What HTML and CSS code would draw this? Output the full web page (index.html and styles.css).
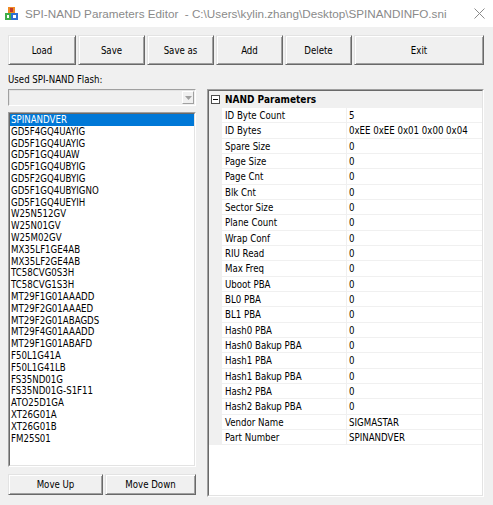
FILE: index.html
```html
<!DOCTYPE html>
<html>
<head>
    <title>SPI-NAND Parameters Editor</title>
    <link rel="stylesheet" href="styles.css">
</head>
<body>
    <div class="window">
        <div class="titlebar">
            <svg class="app-icon" width="13" height="13" viewBox="0 0 13 13">
                <rect x="3" y="0" width="7" height="6" fill="#f08a24"/>
                <rect x="5" y="1" width="3" height="4" fill="#c0392b"/>
                <rect x="0" y="6" width="6" height="7" fill="#3fae49"/>
                <rect x="6" y="6" width="7" height="7" fill="#2f6fd1"/>
                <rect x="2" y="8" width="2" height="3" fill="#ffffff"/>
                <rect x="8" y="8" width="3" height="3" fill="#ffffff"/>
            </svg>
            <span class="title">SPI-NAND Parameters Editor  - C:\Users\kylin.zhang\Desktop\SPINANDINFO.sni</span>
            <svg class="close" width="11" height="11" viewBox="0 0 11 11">
                <path d="M0.5 0.5 L10.5 10.5 M10.5 0.5 L0.5 10.5" stroke="#8a8a8a" stroke-width="1" fill="none"/>
            </svg>
        </div>

        <div class="client">
            <div class="toolbar">
                <button class="btn btn-load">Load</button>
                <button class="btn btn-std">Save</button>
                <button class="btn btn-std">Save as</button>
                <button class="btn btn-std">Add</button>
                <button class="btn btn-std">Delete</button>
                <button class="btn btn-exit">Exit</button>
            </div>

            <div class="main">
                <div class="left">
                    <div class="label">Used SPI-NAND Flash:</div>
                    <div class="combo">
                        <div class="combo-btn">
                            <svg width="7" height="4" viewBox="0 0 7 4"><path d="M0 0 L7 0 L3.5 4 Z" fill="#a0a0a0"/></svg>
                        </div>
                    </div>
                    <div class="list-frame">
                        <ul class="list">
                            <li class="selected">SPINANDVER</li>
                            <li>GD5F4GQ4UAYIG</li>
                            <li>GD5F1GQ4UAYIG</li>
                            <li>GD5F1GQ4UAW</li>
                            <li>GD5F1GQ4UBYIG</li>
                            <li>GD5F2GQ4UBYIG</li>
                            <li>GD5F1GQ4UBYIGNO</li>
                            <li>GD5F1GQ4UEYIH</li>
                            <li>W25N512GV</li>
                            <li>W25N01GV</li>
                            <li>W25M02GV</li>
                            <li>MX35LF1GE4AB</li>
                            <li>MX35LF2GE4AB</li>
                            <li>TC58CVG0S3H</li>
                            <li>TC58CVG1S3H</li>
                            <li>MT29F1G01AAADD</li>
                            <li>MT29F2G01AAAED</li>
                            <li>MT29F2G01ABAGDS</li>
                            <li>MT29F4G01AAADD</li>
                            <li>MT29F1G01ABAFD</li>
                            <li>F50L1G41A</li>
                            <li>F50L1G41LB</li>
                            <li>FS35ND01G</li>
                            <li>FS35ND01G-S1F11</li>
                            <li>ATO25D1GA</li>
                            <li>XT26G01A</li>
                            <li>XT26G01B</li>
                            <li>FM25S01</li>
                        </ul>
                    </div>
                    <div class="move-row">
                        <button class="btn btn-up">Move Up</button>
                        <button class="btn btn-down">Move Down</button>
                    </div>
                </div>

                <div class="grid">
                    <div class="category">
                        <span class="toggle"></span>
                        <span>NAND Parameters</span>
                    </div>
                    <div class="row"><div class="gutter"></div><div class="name">ID Byte Count</div><div class="value">5</div></div>
                    <div class="row"><div class="gutter"></div><div class="name">ID Bytes</div><div class="value">0xEE 0xEE 0x01 0x00 0x04</div></div>
                    <div class="row"><div class="gutter"></div><div class="name">Spare Size</div><div class="value">0</div></div>
                    <div class="row"><div class="gutter"></div><div class="name">Page Size</div><div class="value">0</div></div>
                    <div class="row"><div class="gutter"></div><div class="name">Page Cnt</div><div class="value">0</div></div>
                    <div class="row"><div class="gutter"></div><div class="name">Blk Cnt</div><div class="value">0</div></div>
                    <div class="row"><div class="gutter"></div><div class="name">Sector Size</div><div class="value">0</div></div>
                    <div class="row"><div class="gutter"></div><div class="name">Plane Count</div><div class="value">0</div></div>
                    <div class="row"><div class="gutter"></div><div class="name">Wrap Conf</div><div class="value">0</div></div>
                    <div class="row"><div class="gutter"></div><div class="name">RIU Read</div><div class="value">0</div></div>
                    <div class="row"><div class="gutter"></div><div class="name">Max Freq</div><div class="value">0</div></div>
                    <div class="row"><div class="gutter"></div><div class="name">Uboot PBA</div><div class="value">0</div></div>
                    <div class="row"><div class="gutter"></div><div class="name">BL0 PBA</div><div class="value">0</div></div>
                    <div class="row"><div class="gutter"></div><div class="name">BL1 PBA</div><div class="value">0</div></div>
                    <div class="row"><div class="gutter"></div><div class="name">Hash0 PBA</div><div class="value">0</div></div>
                    <div class="row"><div class="gutter"></div><div class="name">Hash0 Bakup PBA</div><div class="value">0</div></div>
                    <div class="row"><div class="gutter"></div><div class="name">Hash1 PBA</div><div class="value">0</div></div>
                    <div class="row"><div class="gutter"></div><div class="name">Hash1 Bakup PBA</div><div class="value">0</div></div>
                    <div class="row"><div class="gutter"></div><div class="name">Hash2 PBA</div><div class="value">0</div></div>
                    <div class="row"><div class="gutter"></div><div class="name">Hash2 Bakup PBA</div><div class="value">0</div></div>
                    <div class="row"><div class="gutter"></div><div class="name">Vendor Name</div><div class="value">SIGMASTAR</div></div>
                    <div class="row"><div class="gutter"></div><div class="name">Part Number</div><div class="value">SPINANDVER</div></div>
                </div>
            </div>
        </div>
    </div>
</body>
</html>
```

FILE: styles.css
```css
html, body {
    margin: 0;
    padding: 0;
    background: #f0f0f0;
}
body {
    font-family: "DejaVu Sans Condensed", "DejaVu Sans", sans-serif;
    font-stretch: condensed;
    font-size: 9.6px;
    color: #000;
}
.window {
    width: 493px;
    height: 505px;
    display: flex;
    flex-direction: column;
    overflow: hidden;
}
.titlebar {
    height: 27px;
    flex: none;
    background: #fff;
    display: flex;
    align-items: center;
    padding: 0 8px 0 5px;
}
.app-icon {
    flex: none;
    margin-right: 7px;
}
.title {
    white-space: pre;
    font-family: "Liberation Sans", Arial, sans-serif;
    font-stretch: normal;
    font-size: 11.7px;
    color: #8a8a8a;
    flex: 1;
}
.close {
    flex: none;
}
.client {
    flex: 1;
    padding: 8px 9px 0 8px;
}
.btn {
    font-family: inherit;
    font-stretch: condensed;
    font-size: 9.6px;
    color: #000;
    background: #f0f0f0;
    border: 1px solid;
    border-color: #e3e3e3 #696969 #696969 #e3e3e3;
    box-shadow: inset 1px 1px #fff, inset -1px -1px #a0a0a0;
    padding: 0;
    margin: 0;
}
.toolbar {
    display: flex;
    gap: 2px;
    height: 30px;
}
.btn-load { width: 68px; }
.btn-std { width: 67px; }
.btn-exit { flex: 1; }
.main {
    display: flex;
    gap: 11px;
    margin-top: 9px;
}
.left {
    width: 188px;
    display: flex;
    flex-direction: column;
}
.label {
    height: 12px;
    line-height: 12px;
    margin-bottom: 3px;
}
.combo {
    height: 17px;
    box-sizing: border-box;
    border: 1px solid;
    border-color: #a0a0a0 #fff #fff #a0a0a0;
    box-shadow: inset 1px 1px #e3e3e3;
    display: flex;
    justify-content: flex-end;
    padding: 1px;
}
.combo-btn {
    width: 12px;
    box-sizing: border-box;
    border: 1px solid;
    border-color: #fff #a0a0a0 #a0a0a0 #fff;
    display: flex;
    align-items: center;
    justify-content: center;
}
.list-frame {
    margin-top: 6px;
    height: 355px;
    box-sizing: border-box;
    border: 1px solid;
    border-color: #a0a0a0 #fff #fff #a0a0a0;
}
.list {
    list-style: none;
    margin: 0;
    padding: 0;
    height: 100%;
    box-sizing: border-box;
    background: #fff;
    border: 1px solid;
    border-color: #696969 #e3e3e3 #e3e3e3 #696969;
}
.list li {
    height: 11.8px;
    line-height: 11.8px;
    padding-left: 1px;
    font-size: 9.6px;
    white-space: nowrap;
}
.list li.selected {
    background: #0078d7;
    color: #fff;
}
.move-row {
    display: flex;
    gap: 2px;
    margin-top: 7px;
    height: 21px;
}
.btn-up { width: 95px; }
.btn-down { flex: 1; }
.grid {
    flex: 1;
    margin-top: 15px;
    height: 408px;
    box-sizing: border-box;
    border: 1px solid;
    border-color: #a0a0a0 #fff #fff #a0a0a0;
    background: #fff;
    position: relative;
}
.grid::before {
    content: "";
    position: absolute;
    inset: 0;
    border: 1px solid;
    border-color: #696969 #e3e3e3 #e3e3e3 #696969;
    pointer-events: none;
}
.category {
    height: 17px;
    margin: 1px 1px 0 1px;
    background: #f0f0f0;
    display: flex;
    align-items: center;
    font-weight: bold;
    font-size: 10px;
}
.toggle {
    width: 7px;
    height: 7px;
    border: 1px solid #4d4d4d;
    background: #fff;
    margin: 0 5px 0 2px;
    position: relative;
}
.toggle::after {
    content: "";
    position: absolute;
    left: 1px;
    top: 3px;
    width: 5px;
    height: 1px;
    background: #000;
}
.row {
    display: flex;
    height: 15.33px;
    margin: 0 1px;
}
.gutter {
    width: 13px;
    background: #f0f0f0;
}
.name {
    width: 125px;
    box-sizing: border-box;
    border-right: 1px solid #f0f0f0;
    border-bottom: 1px solid #f0f0f0;
    padding-left: 3px;
    line-height: 15.5px;
    white-space: nowrap;
}
.value {
    flex: 1;
    box-sizing: border-box;
    border-bottom: 1px solid #f0f0f0;
    padding-left: 2px;
    line-height: 15.5px;
    white-space: nowrap;
}
```
